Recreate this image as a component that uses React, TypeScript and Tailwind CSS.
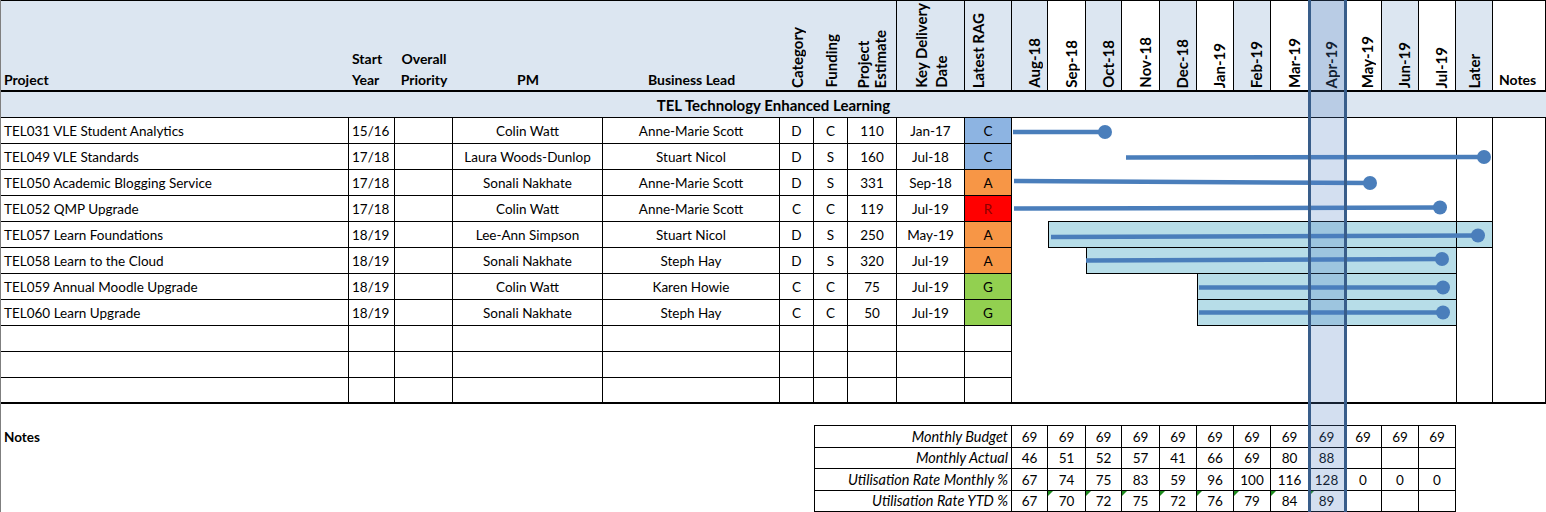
import type { ReactNode } from 'react'

// column template shared by every band of the sheet (Project .. Notes)
const COLS =
  'grid-cols-[348px_46px_58px_150px_177px_34px_34px_49px_68px_47px_36px_38px_36px_38px_37px_37px_37px_38px_36px_37px_37px_37px_37px_53px]'

const MONTHS = ['Aug-18', 'Sep-18', 'Oct-18', 'Nov-18', 'Dec-18', 'Jan-19', 'Feb-19', 'Mar-19', 'Apr-19', 'May-19', 'Jun-19', 'Jul-19']

type Project = {
  name: string
  start: string
  pm: string
  lead: string
  cat: string
  fund: string
  est: string
  date: string
  rag: 'C' | 'A' | 'R' | 'G'
  bar?: [number, number]
}

const projects: Project[] = [
  { name: 'TEL031 VLE Student Analytics', start: '15/16', pm: 'Colin Watt', lead: 'Anne-Marie Scott', cat: 'D', fund: 'C', est: '110', date: 'Jan-17', rag: 'C' },
  { name: 'TEL049 VLE Standards', start: '17/18', pm: 'Laura Woods-Dunlop', lead: 'Stuart Nicol', cat: 'D', fund: 'S', est: '160', date: 'Jul-18', rag: 'C' },
  { name: 'TEL050 Academic Blogging Service', start: '17/18', pm: 'Sonali Nakhate', lead: 'Anne-Marie Scott', cat: 'D', fund: 'S', est: '331', date: 'Sep-18', rag: 'A' },
  { name: 'TEL052 QMP Upgrade', start: '17/18', pm: 'Colin Watt', lead: 'Anne-Marie Scott', cat: 'C', fund: 'C', est: '119', date: 'Jul-19', rag: 'R' },
  { name: 'TEL057 Learn Foundations', start: '18/19', pm: 'Lee-Ann Simpson', lead: 'Stuart Nicol', cat: 'D', fund: 'S', est: '250', date: 'May-19', rag: 'A', bar: [1, 12] },
  { name: 'TEL058 Learn to the Cloud', start: '18/19', pm: 'Sonali Nakhate', lead: 'Steph Hay', cat: 'D', fund: 'S', est: '320', date: 'Jul-19', rag: 'A', bar: [2, 11] },
  { name: 'TEL059 Annual Moodle Upgrade', start: '18/19', pm: 'Colin Watt', lead: 'Karen Howie', cat: 'C', fund: 'C', est: '75', date: 'Jul-19', rag: 'G', bar: [5, 11] },
  { name: 'TEL060 Learn Upgrade', start: '18/19', pm: 'Sonali Nakhate', lead: 'Steph Hay', cat: 'C', fund: 'C', est: '50', date: 'Jul-19', rag: 'G', bar: [5, 11] },
]

const ragStyle: Record<string, string> = {
  C: 'bg-[#8db4e2]',
  A: 'bg-[#f79646]',
  R: 'bg-[#ff0000] text-[#8b0000]',
  G: 'bg-[#92d050]',
}

// gantt strokes: x1, y1, x2, y2 (end dot sits on x2/y2)
const lines = [
  [1012, 132, 1104, 132],
  [1125, 157.5, 1483, 157],
  [1013, 181, 1369, 183],
  [1013, 208.5, 1439, 207.5],
  [1050, 237, 1477, 235.5],
  [1085, 260.5, 1441, 259],
  [1198, 287.5, 1442, 287.5],
  [1198, 312.5, 1442, 312.5],
]

const budget = {
  'Monthly Budget': ['69', '69', '69', '69', '69', '69', '69', '69', '69', '69', '69', '69'],
  'Monthly Actual': ['46', '51', '52', '57', '41', '66', '69', '80', '88', '', '', ''],
  'Utilisation Rate Monthly %': ['67', '74', '75', '83', '59', '96', '100', '116', '128', '0', '0', '0'],
  'Utilisation Rate YTD %': ['67', '70', '72', '75', '72', '76', '79', '84', '89', '', '', ''],
}

function Vert({ children, className = '' }: { children: ReactNode; className?: string }) {
  return <span className={`block [writing-mode:vertical-rl] rotate-180 text-[15px] ${className}`}>{children}</span>
}

function hasBar(row: number, col: number) {
  const b = projects[row]?.bar
  return !!b && col >= b[0] && col <= b[1]
}

function Header() {
  const hcell = 'bg-[#dce6f1] flex items-end'
  return (
    <div className={`grid ${COLS} h-[92px] border-t border-b-2 border-black font-bold text-[14px]`}>
      <div className={`${hcell} pl-[3px] pb-[2px]`}>Project</div>
      <div className={`${hcell} flex-col !items-start justify-end gap-[5px] pl-[3px] pb-[2px]`}>
        <span>Start</span>
        <span>Year</span>
      </div>
      <div className={`${hcell} flex-col !items-center justify-end gap-[5px] pb-[2px]`}>
        <span>Overall</span>
        <span>Priority</span>
      </div>
      <div className={`${hcell} justify-center pb-[2px]`}>PM</div>
      <div className={`${hcell} justify-center pb-[2px]`}>Business Lead</div>
      <div className={`${hcell} justify-center pb-[2px]`}>
        <Vert>Category</Vert>
      </div>
      <div className={`${hcell} justify-center pb-[2px]`}>
        <Vert>Funding</Vert>
      </div>
      <div className={`${hcell} justify-center pb-[2px] border-r border-black`}>
        <Vert className="leading-[17px]">
          Project
          <br />
          Estimate
        </Vert>
      </div>
      <div className={`${hcell} justify-center pb-[2px] border-r border-black`}>
        <Vert className="leading-[20px]">
          Key Delivery
          <br />
          Date
        </Vert>
      </div>
      <div className={`${hcell} justify-center pb-[2px] pr-[20px] border-r border-black`}>
        <Vert>Latest RAG</Vert>
      </div>
      {MONTHS.map((m, i) => (
        <div
          key={m}
          className={`flex items-end justify-center pl-[8px] pb-[2px] border-r border-black ${i % 2 === 0 ? 'bg-[#dce6f1]' : 'bg-white'}`}
        >
          <Vert>{m}</Vert>
        </div>
      ))}
      <div className={`${hcell} justify-center pb-[2px] border-r border-black`}>
        <Vert>Later</Vert>
      </div>
      <div className="bg-white flex items-end pl-[6px] pb-[2px] border-r border-black">Notes</div>
    </div>
  )
}

function DataRow({ p, row, last }: { p?: Project; row: number; last: boolean }) {
  const bb = last ? 'border-b-2' : 'border-b'
  const cell = `${bb} border-r border-black flex items-center`
  return (
    <div className={`grid ${COLS} h-[26px]`}>
      <div className={`${cell} pl-[3px] truncate`}>{p?.name}</div>
      <div className={`${cell} pl-[3px]`}>{p?.start}</div>
      <div className={cell} />
      <div className={`${cell} justify-center`}>{p?.pm}</div>
      <div className={`${cell} justify-center`}>{p?.lead}</div>
      <div className={`${cell} justify-center`}>{p?.cat}</div>
      <div className={`${cell} justify-center`}>{p?.fund}</div>
      <div className={`${cell} justify-center`}>{p?.est}</div>
      <div className={`${cell} justify-center`}>{p?.date}</div>
      <div className={`${cell} justify-center ${p ? ragStyle[p.rag] : ''}`}>{p?.rag}</div>
      {Array.from({ length: 13 }, (_, c) => {
        const on = hasBar(row, c)
        const edge = on || hasBar(row + 1, c)
        const first = on && projects[row]?.bar?.[0] === c
        return (
          <div
            key={c}
            className={[
              'border-black',
              on ? 'bg-[#b7dde8]' : '',
              last ? 'border-b-2' : edge ? 'border-b' : '',
              first ? 'border-l' : '',
              c === 12 ? 'border-x' : '',
            ].join(' ')}
          />
        )
      })}
      <div className={`${last ? 'border-b-2' : ''} border-r border-black`} />
    </div>
  )
}

function BudgetTable() {
  const rows = Object.entries(budget)
  const heights = ['h-[23px]', 'h-[21px]', 'h-[22px]', 'h-[21px]']
  return (
    <div className={`grid ${COLS} pt-[21px] text-[13.5px]`}>
      {rows.map(([label, vals], r) => (
        <div key={label} className="contents">
          <div className={`col-span-6 ${heights[r]} flex items-center pl-[3px] font-bold`}>
            {r === 0 ? 'Notes' : ''}
          </div>
          <div
            className={`col-span-4 ${heights[r]} ${r === 0 ? 'border-t' : ''} border-x border-b border-black flex items-center justify-end pr-[3px] italic text-[14.5px]`}
          >
            {label}
          </div>
          {vals.map((v, c) => (
            <div
              key={c}
              className={`relative ${r === 0 ? 'border-t' : ''} border-r border-b border-black flex items-center justify-center`}
            >
              {r === 3 && c >= 1 && c <= 8 && (
                <span className="absolute left-0 top-0 w-0 h-0 border-t-[5px] border-r-[5px] border-t-[#1e8c1e] border-r-transparent" />
              )}
              {v}
            </div>
          ))}
          <div />
          <div />
        </div>
      ))}
    </div>
  )
}

export default function App() {
  return (
    <div className="relative w-[1546px] h-[512px] overflow-hidden bg-white text-black text-[13.5px] leading-[16px] font-[Lato,sans-serif] border-l border-[#7f7f7f]">
      <Header />
      <div className="h-[26px] bg-[#dce6f1] border-b border-black flex items-center justify-center font-bold text-[15px]">
        TEL Technology Enhanced Learning
      </div>
      {Array.from({ length: 11 }, (_, i) => (
        <DataRow key={i} p={projects[i]} row={i} last={i === 10} />
      ))}
      <BudgetTable />

      <svg className="absolute left-0 top-0 pointer-events-none" width={1546} height={512}>
        {lines.map(([x1, y1, x2, y2], i) => (
          <g key={i}>
            <line x1={x1} y1={y1} x2={x2} y2={y2} stroke="#4a7ebb" strokeWidth={4.5} />
            <circle cx={x2} cy={y2} r={7} fill="#4a7ebb" />
          </g>
        ))}
      </svg>

      {/* current month highlight */}
      <div className="absolute left-[1307px] top-0 w-[39px] h-[512px] border-x-[3px] border-[#385d8a] bg-[rgba(79,127,195,0.25)] pointer-events-none" />
    </div>
  )
}
